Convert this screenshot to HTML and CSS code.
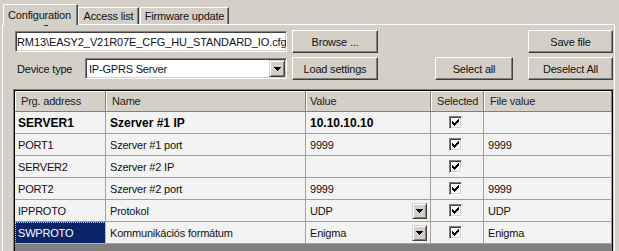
FILE: index.html
```html
<!DOCTYPE html>
<html>
<head>
<meta charset="utf-8">
<link rel="stylesheet" href="styles.css">
</head>
<body>
<div class="tabs">
  <div class="tab tab-active">Configuration</div>
  <div class="tab tab-access">Access list</div>
  <div class="tab tab-fw">Firmware update</div>
</div>
<div class="panel">
  <div class="toolbar">
    <div class="textbox"><span class="textbox-text">RM13\EASY2_V21R07E_CFG_HU_STANDARD_IO.cfg</span></div>
    <div class="btn btn-wide">Browse ...</div>
    <div class="btn btn-save">Save file</div>
  </div>
  <div class="toolbar toolbar-2">
    <div class="label">Device type</div>
    <div class="combo">
      <span class="combo-text">IP-GPRS Server</span>
      <span class="drop drop-big"><svg width="7" height="4" viewBox="0 0 7 4" shape-rendering="crispEdges"><path d="M0 0h7v1H0zM1 1h5v1H1zM2 2h3v1H2zM3 3h1v1H3z" fill="#000"/></svg></span>
    </div>
    <div class="btn btn-wide">Load settings</div>
    <div class="btn btn-selall">Select all</div>
    <div class="btn btn-desel">Deselect All</div>
  </div>
  <div class="grid">
    <div class="grid-inner">
      <div class="grow ghead">
        <div class="hcell">Prg. address</div>
        <div class="hcell">Name</div>
        <div class="hcell hcell-value">Value</div>
        <div class="hcell">Selected</div>
        <div class="hcell">File value</div>
      </div>
      <div class="grow bold">
        <div class="cell c1">SERVER1</div>
        <div class="cell">Szerver #1 IP</div>
        <div class="cell">10.10.10.10</div>
        <div class="cell chk"><span class="checkbox"><svg width="7" height="7" viewBox="0 0 7 7" shape-rendering="crispEdges"><path d="M0 2h1v3H0zM1 3h1v3H1zM2 4h1v3H2zM3 3h1v3H3zM4 2h1v3H4zM5 1h1v3H5zM6 0h1v3H6z" fill="#000"/></svg></span></div>
        <div class="cell"></div>
      </div>
      <div class="grow">
        <div class="cell c1">PORT1</div>
        <div class="cell">Szerver #1 port</div>
        <div class="cell">9999</div>
        <div class="cell chk"><span class="checkbox"><svg width="7" height="7" viewBox="0 0 7 7" shape-rendering="crispEdges"><path d="M0 2h1v3H0zM1 3h1v3H1zM2 4h1v3H2zM3 3h1v3H3zM4 2h1v3H4zM5 1h1v3H5zM6 0h1v3H6z" fill="#000"/></svg></span></div>
        <div class="cell">9999</div>
      </div>
      <div class="grow">
        <div class="cell c1">SERVER2</div>
        <div class="cell">Szerver #2 IP</div>
        <div class="cell"></div>
        <div class="cell chk"><span class="checkbox"><svg width="7" height="7" viewBox="0 0 7 7" shape-rendering="crispEdges"><path d="M0 2h1v3H0zM1 3h1v3H1zM2 4h1v3H2zM3 3h1v3H3zM4 2h1v3H4zM5 1h1v3H5zM6 0h1v3H6z" fill="#000"/></svg></span></div>
        <div class="cell"></div>
      </div>
      <div class="grow">
        <div class="cell c1">PORT2</div>
        <div class="cell">Szerver #2 port</div>
        <div class="cell">9999</div>
        <div class="cell chk"><span class="checkbox"><svg width="7" height="7" viewBox="0 0 7 7" shape-rendering="crispEdges"><path d="M0 2h1v3H0zM1 3h1v3H1zM2 4h1v3H2zM3 3h1v3H3zM4 2h1v3H4zM5 1h1v3H5zM6 0h1v3H6z" fill="#000"/></svg></span></div>
        <div class="cell">9999</div>
      </div>
      <div class="grow">
        <div class="cell c1">IPPROTO</div>
        <div class="cell">Protokol</div>
        <div class="cell combo-cell"><span>UDP</span><span class="drop drop-small"><svg width="7" height="4" viewBox="0 0 7 4" shape-rendering="crispEdges"><path d="M0 0h7v1H0zM1 1h5v1H1zM2 2h3v1H2zM3 3h1v1H3z" fill="#000"/></svg></span></div>
        <div class="cell chk"><span class="checkbox"><svg width="7" height="7" viewBox="0 0 7 7" shape-rendering="crispEdges"><path d="M0 2h1v3H0zM1 3h1v3H1zM2 4h1v3H2zM3 3h1v3H3zM4 2h1v3H4zM5 1h1v3H5zM6 0h1v3H6z" fill="#000"/></svg></span></div>
        <div class="cell">UDP</div>
      </div>
      <div class="grow">
        <div class="cell c1 cell-sel">SWPROTO</div>
        <div class="cell">Kommunikációs formátum</div>
        <div class="cell combo-cell"><span>Enigma</span><span class="drop drop-small"><svg width="7" height="4" viewBox="0 0 7 4" shape-rendering="crispEdges"><path d="M0 0h7v1H0zM1 1h5v1H1zM2 2h3v1H2zM3 3h1v1H3z" fill="#000"/></svg></span></div>
        <div class="cell chk"><span class="checkbox"><svg width="7" height="7" viewBox="0 0 7 7" shape-rendering="crispEdges"><path d="M0 2h1v3H0zM1 3h1v3H1zM2 4h1v3H2zM3 3h1v3H3zM4 2h1v3H4zM5 1h1v3H5zM6 0h1v3H6z" fill="#000"/></svg></span></div>
        <div class="cell">Enigma</div>
      </div>
    </div>
  </div>
</div>
</body>
</html>
```
FILE: styles.css
```css
html, body {
  margin: 0;
  padding: 0;
}
body {
  background: #d4d0c8;
  font-family: "Liberation Sans", Arial, sans-serif;
  font-size: 11px;
  letter-spacing: -0.2px;
  color: #111;
  width: 619px;
  height: 251px;
  overflow: hidden;
}
.tabs {
  display: flex;
  align-items: flex-end;
  height: 24px;
  padding-left: 3px;
  position: relative;
  z-index: 1;
}
.tab {
  box-sizing: border-box;
  height: 17px;
  border-top: 1px solid #fff;
  border-left: 1px solid #fff;
  border-right: 1px solid #404040;
  box-shadow: inset -1px 0 #808080;
  display: flex;
  align-items: center;
  justify-content: center;
  background: #d4d0c8;
  white-space: nowrap;
}
.tab-active {
  width: 75px;
  height: 21px;
  margin-bottom: -1px;
  position: relative;
  padding-right: 2px;
}
.tab-active::after {
  content: "";
  position: absolute;
  left: 40px;
  bottom: -1px;
  width: 4px;
  height: 1px;
  background: #333;
}
.tab-access {
  width: 61px;
}
.tab-fw {
  width: 89px;
  margin-left: 1px;
}
.panel {
  box-sizing: border-box;
  margin-left: 2px;
  width: 613px;
  height: 227px;
  border-top: 1px solid #fff;
  border-left: 1px solid #fff;
  border-right: 1px solid #fff;
  padding: 5px 1px 0 12px;
}
.toolbar {
  display: flex;
  align-items: center;
  height: 23px;
}
.toolbar-2 {
  margin-top: 4px;
}
.textbox, .combo {
  box-sizing: border-box;
  height: 21px;
  background: #fff;
  border: 1px solid;
  border-color: #808080 #fff #fff #808080;
  box-shadow: inset 1px 1px #404040, inset -1px -1px #d4d0c8;
  padding: 1px;
  display: flex;
  align-items: center;
  overflow: hidden;
  white-space: nowrap;
}
.textbox {
  width: 272px;
}
.textbox-text {
  letter-spacing: -0.1px;
}
.combo {
  width: 202px;
}
.combo-text {
  flex: 1;
  padding-left: 2px;
}
.label {
  width: 70px;
  padding-left: 2px;
  box-sizing: border-box;
}
.btn {
  box-sizing: border-box;
  height: 23px;
  border: 1px solid;
  border-color: #fff #404040 #404040 #fff;
  box-shadow: inset -1px -1px #808080;
  display: flex;
  align-items: center;
  justify-content: center;
  white-space: nowrap;
}
.btn-wide {
  width: 86px;
  margin-left: 5px;
}
.btn-save {
  width: 85px;
  margin-left: auto;
}
.btn-selall {
  width: 78px;
  margin-left: auto;
}
.btn-desel {
  width: 85px;
  margin-left: 15px;
}
.drop {
  box-sizing: border-box;
  border: 1px solid;
  border-color: #d4d0c8 #404040 #404040 #d4d0c8;
  box-shadow: inset 1px 1px #fff, inset -1px -1px #808080;
  background: #d4d0c8;
  display: flex;
  align-items: center;
  justify-content: center;
  flex: none;
}
.drop svg {
  display: block;
}
.drop-big {
  width: 16px;
  height: 17px;
}
.drop-small {
  width: 15px;
  height: 16px;
  margin-top: 1px;
}
.grid {
  box-sizing: border-box;
  margin: 9px -1px 0 -2px;
  height: 170px;
  border: 1px solid;
  border-color: #808080 #d4d0c8 #d4d0c8 #808080;
  border-bottom: none;
}
.grid-inner {
  box-sizing: border-box;
  height: 100%;
  border: 1px solid #000;
  border-bottom: none;
  background: #808080;
}
.grow {
  display: grid;
  grid-template-columns: 91px 200px 125px 53px 1fr;
}
.hcell {
  box-sizing: border-box;
  height: 21px;
  background: #d4d0c8;
  border-right: 1px solid #808080;
  border-bottom: 1px solid #808080;
  box-shadow: inset 1px 1px #fff;
  padding-left: 6px;
  display: flex;
  align-items: center;
  color: #222;
  white-space: nowrap;
}
.hcell-value {
  padding-left: 4px;
}
.cell {
  box-sizing: border-box;
  height: 22px;
  background: #f3f3f3;
  border-right: 1px solid #a0a0a0;
  border-bottom: 1px solid #a0a0a0;
  padding-left: 4px;
  display: flex;
  align-items: center;
  white-space: nowrap;
  overflow: hidden;
  color: #111;
}
.c1 {
  padding-left: 3px;
}
.bold .cell {
  font-weight: bold;
  font-size: 12px;
  letter-spacing: 0;
  color: #000;
}
.cell-sel {
  background: #0a246a;
  color: #fff;
  outline: 1px dotted #c8c8c8;
  outline-offset: -1px;
}
.chk {
  justify-content: center;
  padding-left: 0;
}
.checkbox {
  box-sizing: border-box;
  width: 13px;
  height: 13px;
  background: #fff;
  border: 1px solid;
  border-color: #808080 #fff #fff #808080;
  box-shadow: inset 1px 1px #404040, inset -1px -1px #d4d0c8;
  display: flex;
  align-items: center;
  justify-content: center;
  margin-left: -3px;
}
.checkbox svg {
  display: block;
}
.combo-cell {
  justify-content: space-between;
  padding-right: 3px;
}
```
